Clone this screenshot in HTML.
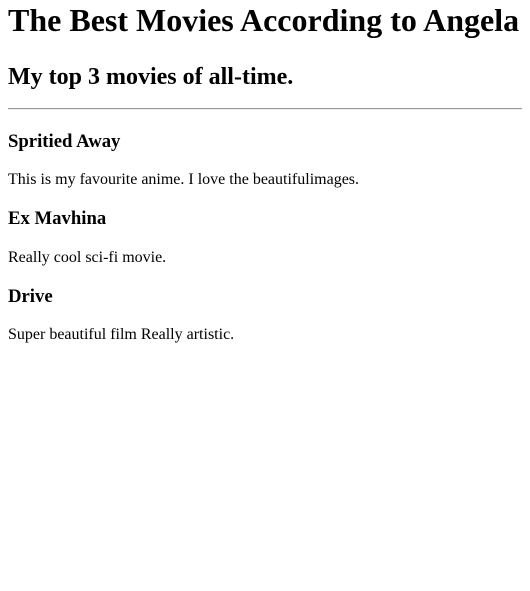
<!DOCTYPE html>
<html><head><meta charset="utf-8"><style>
html,body{margin:0;padding:0;background:#fff}
body{margin:0 8px;font-family:"Liberation Serif",serif;color:#000}
h1{font-size:32px;margin:2px 0 24.5px;font-weight:bold}
h2{font-size:24px;margin:0 0 17.5px}
h3{font-size:18.72px;margin:18.72px 0}
hr+h3{margin-top:20.7px}
p{font-size:16px;margin:16px 0}
hr{border:none;border-top:1px solid #9a9a9a;border-bottom:1px solid #eee;margin:8px 0 0;height:0}
</style></head><body>
<h1>The Best Movies According to Angela</h1>
<h2>My top 3 movies of all-time.</h2>
<hr>
<h3>Spritied Away</h3>
<p>This is my favourite anime. I love the beautifulimages.</p>
<h3>Ex Mavhina</h3>
<p>Really cool sci-fi movie.</p>
<h3>Drive</h3>
<p>Super beautiful film Really artistic.</p>
</body></html>
